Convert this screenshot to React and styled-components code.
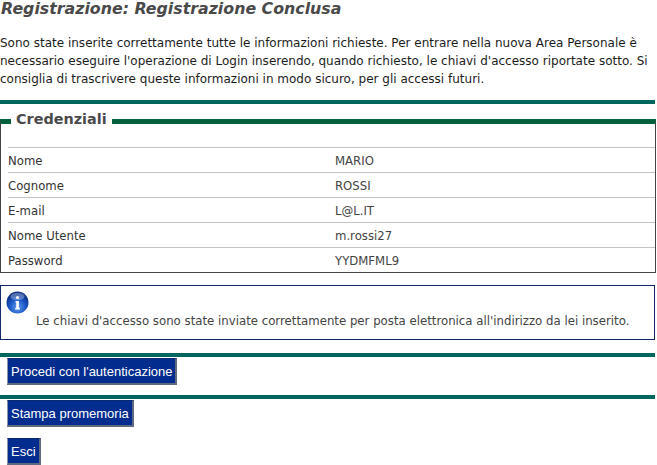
import React from 'react';
import styled, { createGlobalStyle } from 'styled-components';

const GlobalStyle = createGlobalStyle`
  html, body {
    margin: 0;
    padding: 0;
    background: #fff;
  }
  body {
    font-family: 'DejaVu Sans', Verdana, sans-serif;
    font-size: 12px;
    color: #222;
  }
`;

const Page = styled.div`
  width: 657px;
  height: 465px;
  overflow: hidden;
`;

const Title = styled.h1`
  margin: 0;
  height: 20px;
  line-height: 18px;
  padding-left: 1px;
  font-size: 15.8px;
  font-weight: bold;
  font-style: italic;
  color: #4a4a4a;
`;

const Intro = styled.p`
  margin: 14px 0 0;
  width: 650px;
  line-height: 18px;
  font-size: 12px;
  color: #1c1c1c;
`;

const Rule = styled.div`
  width: 655px;
  height: 4px;
  background: #00665e;
  margin-top: ${(p) => p.$top}px;
`;

const Credentials = styled.fieldset`
  box-sizing: border-box;
  width: 656px;
  height: 163px;
  margin: 6px 0 0;
  padding: 14px 0 0 7px;
  border: 1px solid #444;
  border-top: 5px solid #04613c;
`;

const Legend = styled.legend`
  margin-left: 3px;
  padding: 0 5px 5px;
  font-size: 14.4px;
  line-height: 18px;
  font-weight: bold;
  color: #4a4a4a;
`;

const Row = styled.div`
  box-sizing: border-box;
  display: flex;
  align-items: center;
  height: 25px;
  padding-top: 2px;
  border-top: 1px solid #c4c4c4;
`;

const Label = styled.div`
  width: 327px;
  font-size: 11.7px;
  color: #333;
`;

const Value = styled.div`
  font-size: 11.7px;
  color: #444;
`;

const InfoBox = styled.div`
  box-sizing: border-box;
  width: 655px;
  height: 55px;
  margin-top: 12px;
  padding: 5px 0 0 5px;
  border: 1px solid #14286e;
`;

const InfoText = styled.div`
  margin: 0 0 0 30px;
  line-height: 14px;
  font-size: 11.75px;
  color: #444;
`;

const ButtonRow = styled.div`
  display: flex;
  padding-left: 7px;
  margin-top: ${(p) => p.$top}px;
`;

const Button = styled.button`
  box-sizing: border-box;
  height: 27px;
  padding: 0 3px;
  background: #032c8f;
  color: #fff;
  font-family: 'Liberation Sans', Arial, sans-serif;
  font-size: 13px;
  border: 1px solid;
  border-color: #0a2a70 #5f6a80 #5f6a80 #8a93a8;
  border-width: 1px 2px 2px 1px;
`;

const rows = [
  ['Nome', 'MARIO'],
  ['Cognome', 'ROSSI'],
  ['E-mail', 'L@L.IT'],
  ['Nome Utente', 'm.rossi27'],
  ['Password', 'YYDMFML9'],
];

const InfoIcon = () => (
  <svg width="23" height="23" viewBox="0 0 23 23" style={{ display: 'block' }}>
    <defs>
      <radialGradient id="ball" cx="50%" cy="72%" r="62%">
        <stop offset="0%" stopColor="#5f9cf0" />
        <stop offset="60%" stopColor="#1a55c4" />
        <stop offset="100%" stopColor="#0a2f86" />
      </radialGradient>
    </defs>
    <circle cx="11.5" cy="11.5" r="11" fill="url(#ball)" />
    <ellipse cx="11.5" cy="5.5" rx="7" ry="3.8" fill="#fff" opacity="0.3" />
    <circle cx="11.5" cy="6.5" r="1.6" fill="#fff" />
    <path d="M9.5 10h3.4v7h1V18.500H9.200V17h1v-5.500h-.7z" fill="#fff" />
  </svg>
);

export default function App() {
  return (
    <Page>
      <GlobalStyle />
      <Title>Registrazione: Registrazione Conclusa</Title>
      <Intro>
        Sono state inserite correttamente tutte le informazioni richieste. Per entrare nella nuova
        Area Personale è necessario eseguire l'operazione di Login inserendo, quando richiesto, le
        chiavi d'accesso riportate sotto. Si consiglia di trascrivere queste informazioni in modo
        sicuro, per gli accessi futuri.
      </Intro>
      <Rule $top={12} />
      <Credentials>
        <Legend>Credenziali</Legend>
        {rows.map(([label, value]) => (
          <Row key={label}>
            <Label>{label}</Label>
            <Value>{value}</Value>
          </Row>
        ))}
      </Credentials>
      <InfoBox>
        <InfoIcon />
        <InfoText>
          Le chiavi d'accesso sono state inviate correttamente per posta elettronica all'indirizzo da
          lei inserito.
        </InfoText>
      </InfoBox>
      <Rule $top={13} />
      <ButtonRow $top={1}>
        <Button>Procedi con l'autenticazione</Button>
      </ButtonRow>
      <Rule $top={10} />
      <ButtonRow $top={1}>
        <Button>Stampa promemoria</Button>
      </ButtonRow>
      <ButtonRow $top={11}>
        <Button>Esci</Button>
      </ButtonRow>
    </Page>
  );
}
